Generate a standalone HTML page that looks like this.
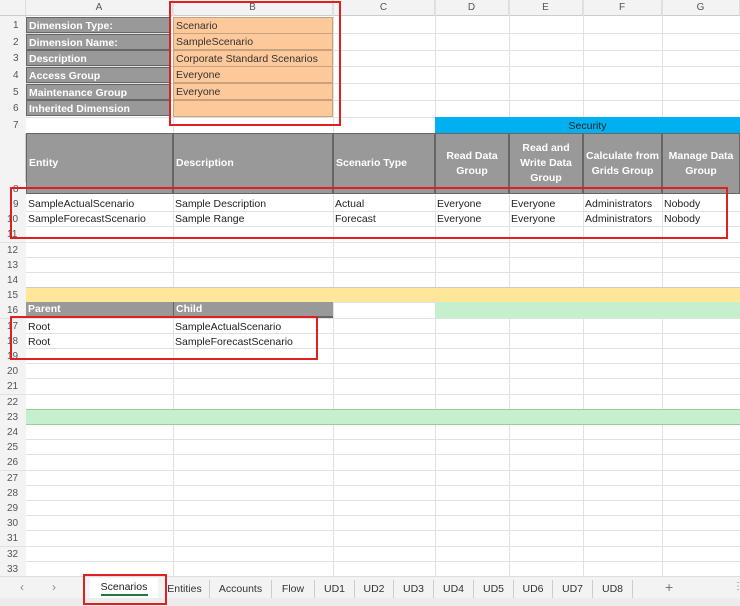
<!DOCTYPE html>
<html><head><meta charset="utf-8"><style>
*{margin:0;padding:0;box-sizing:border-box}
body{width:740px;height:606px;overflow:hidden;background:#fff;font-family:"Liberation Sans",Calibri,sans-serif;font-size:10.5px;color:#222;position:relative}
.a{position:absolute}
.hl{position:absolute;left:0;width:740px;height:1px;background:#e1e1e1}
.vl{position:absolute;top:0;height:576px;width:1px;background:#e1e1e1}
.ch{position:absolute;top:0;height:16px;text-align:center;line-height:16px;color:#555;font-size:10px;background:#f3f3f3;border-right:1px solid #ddd;border-bottom:1px solid #ccc}
.rn{position:absolute;left:0;width:26px;font-size:10px;color:#555;text-align:left;padding-left:13px;background:#f3f3f3}
.g{position:absolute;background:#999;color:#fff;font-weight:bold;border:1px solid #666;padding-left:2px}
.o{position:absolute;background:#fdc99a;border:1px solid #c9a27d;padding-left:2px;color:#333}
.t{position:absolute;padding-left:2px;color:#222;top:0}
.hd{position:absolute;background:#999;color:#fff;font-weight:bold;border:1px solid #666;display:flex;align-items:center;justify-content:center;text-align:center;line-height:15px}
.red{position:absolute;border:2px solid #e02020}
.tab{position:absolute;top:580px;height:18px;line-height:18px;font-size:10.5px;color:#333;border-right:1px solid #ccc;text-align:center}
</style></head><body>
<div class="a" style="left:0;top:0;width:26px;height:576px;background:#f3f3f3;border-right:1px solid #ccc"></div>
<div class="ch" style="left:0;width:26px"></div>
<div class="ch" style="left:26px;width:147px">A</div>
<div class="ch" style="left:173px;width:160px">B</div>
<div class="ch" style="left:333px;width:102px">C</div>
<div class="ch" style="left:435px;width:74px">D</div>
<div class="ch" style="left:509px;width:74px">E</div>
<div class="ch" style="left:583px;width:79px">F</div>
<div class="ch" style="left:662px;width:78px">G</div>
<div class="vl" style="left:173px"></div><div class="vl" style="left:333px"></div><div class="vl" style="left:435px"></div><div class="vl" style="left:509px"></div><div class="vl" style="left:583px"></div><div class="vl" style="left:662px"></div>
<div class="hl" style="top:33px"></div><div class="hl" style="top:50px"></div><div class="hl" style="top:66px"></div><div class="hl" style="top:83px"></div><div class="hl" style="top:100px"></div><div class="hl" style="top:117px"></div><div class="hl" style="top:133px"></div>
<div class="rn" style="top:17px;line-height:17px">1</div><div class="rn" style="top:34px;line-height:17px">2</div><div class="rn" style="top:50px;line-height:17px">3</div><div class="rn" style="top:67px;line-height:17px">4</div><div class="rn" style="top:84px;line-height:17px">5</div><div class="rn" style="top:100px;line-height:17px">6</div><div class="rn" style="top:117px;line-height:17px">7</div><div class="rn" style="top:182px;line-height:16px">8</div>
<div class="g" style="left:26px;top:17px;width:145px;height:16px;line-height:16px">Dimension Type:</div>
<div class="g" style="left:26px;top:34px;width:145px;height:16px;line-height:16px">Dimension Name:</div>
<div class="g" style="left:26px;top:50px;width:145px;height:16px;line-height:16px">Description</div>
<div class="g" style="left:26px;top:67px;width:145px;height:16px;line-height:16px">Access Group</div>
<div class="g" style="left:26px;top:84px;width:145px;height:16px;line-height:16px">Maintenance Group</div>
<div class="g" style="left:26px;top:100px;width:145px;height:16px;line-height:16px">Inherited Dimension</div>
<div class="o" style="left:173px;top:17px;width:160px;height:17px;line-height:17px">Scenario</div>
<div class="o" style="left:173px;top:33px;width:160px;height:17px;line-height:17px">SampleScenario</div>
<div class="o" style="left:173px;top:50px;width:160px;height:17px;line-height:17px">Corporate Standard Scenarios</div>
<div class="o" style="left:173px;top:66px;width:160px;height:17px;line-height:17px">Everyone</div>
<div class="o" style="left:173px;top:83px;width:160px;height:17px;line-height:17px">Everyone</div>
<div class="o" style="left:173px;top:100px;width:160px;height:17px"></div>
<div class="a" style="left:435px;top:117px;width:305px;height:16px;background:#00b0f0;color:#222;text-align:center;line-height:18px">Security</div>
<div class="hd" style="left:26px;top:133px;width:147px;height:61px;justify-content:flex-start;padding-left:2px">Entity</div>
<div class="hd" style="left:173px;top:133px;width:160px;height:61px;justify-content:flex-start;padding-left:2px">Description</div>
<div class="hd" style="left:333px;top:133px;width:102px;height:61px;justify-content:flex-start;padding-left:2px">Scenario Type</div>
<div class="hd" style="left:435px;top:133px;width:74px;height:61px">Read Data<br>Group</div>
<div class="hd" style="left:509px;top:133px;width:74px;height:61px">Read and<br>Write Data<br>Group</div>
<div class="hd" style="left:583px;top:133px;width:79px;height:61px">Calculate from<br>Grids Group</div>
<div class="hd" style="left:662px;top:133px;width:78px;height:61px">Manage Data<br>Group</div>
<div id="rows"></div>
<script>
var h='';var top0=196,rh=15.2;
for(var i=9;i<=33;i++){var t=top0+(i-9)*rh;h+='<div class="hl" style="top:'+(t+rh).toFixed(1)+'px"></div><div class="rn" style="top:'+(t+1).toFixed(1)+'px;line-height:15px;padding-left:'+(i<10?13:7)+'px">'+i+'</div>';}
document.getElementById('rows').innerHTML=h;
</script>
<div class="a" style="left:26px;top:287px;width:714px;height:15px;background:#ffe699;border-top:1px solid #ccc"></div>
<div class="a" style="left:26px;top:302px;width:307px;height:16px;background:#999;border-bottom:2px solid #666;color:#fff;font-weight:bold;line-height:15px;padding-left:2px">Parent</div>
<div class="a" style="left:173px;top:302px;width:160px;height:16px;border-left:1px solid #666;color:#fff;font-weight:bold;line-height:15px;padding-left:2px">Child</div>
<div class="a" style="left:435px;top:302px;width:305px;height:16px;background:#c6efce"></div>
<div class="a" style="left:26px;top:409px;width:714px;height:16px;background:#c6efce;border-top:1px solid #9c9;border-bottom:1px solid #9c9"></div>
<div class="a" style="left:0;top:198px;width:740px;height:15px"><div class="t" style="left:26px">SampleActualScenario</div><div class="t" style="left:173px">Sample Description</div><div class="t" style="left:333px">Actual</div><div class="t" style="left:435px">Everyone</div><div class="t" style="left:509px">Everyone</div><div class="t" style="left:583px">Administrators</div><div class="t" style="left:662px">Nobody</div></div>
<div class="a" style="left:0;top:213px;width:740px;height:15px"><div class="t" style="left:26px">SampleForecastScenario</div><div class="t" style="left:173px">Sample Range</div><div class="t" style="left:333px">Forecast</div><div class="t" style="left:435px">Everyone</div><div class="t" style="left:509px">Everyone</div><div class="t" style="left:583px">Administrators</div><div class="t" style="left:662px">Nobody</div></div>
<div class="a" style="left:0;top:321px;width:740px;height:15px"><div class="t" style="left:26px">Root</div><div class="t" style="left:173px">SampleActualScenario</div></div>
<div class="a" style="left:0;top:336px;width:740px;height:15px"><div class="t" style="left:26px">Root</div><div class="t" style="left:173px">SampleForecastScenario</div></div>
<div class="red" style="left:169px;top:1px;width:172px;height:125px"></div>
<div class="red" style="left:10px;top:187px;width:718px;height:52px"></div>
<div class="red" style="left:10px;top:316px;width:308px;height:44px"></div>
<div class="a" style="left:0;top:576px;width:740px;height:30px;background:#f3f3f3;border-top:1px solid #ddd"></div>
<div class="a" style="left:0;top:598px;width:740px;height:8px;background:#ececec"></div>
<div class="a" style="left:20px;top:580px;font-size:12px;color:#888">&#8249;</div>
<div class="a" style="left:52px;top:580px;font-size:12px;color:#888">&#8250;</div>
<div class="a" style="left:90px;top:578px;width:68px;height:20px;background:#fff;text-align:center;line-height:19px;color:#222">Scenarios</div>
<div class="a" style="left:101px;top:594px;width:47px;height:2px;background:#1e7b3b"></div>
<div class="tab" style="left:160px;width:50px">Entities</div>
<div class="tab" style="left:210px;width:62px">Accounts</div>
<div class="tab" style="left:272px;width:43px">Flow</div>
<div class="tab" style="left:315px;width:40px">UD1</div>
<div class="tab" style="left:355px;width:39px">UD2</div>
<div class="tab" style="left:394px;width:40px">UD3</div>
<div class="tab" style="left:434px;width:40px">UD4</div>
<div class="tab" style="left:474px;width:40px">UD5</div>
<div class="tab" style="left:514px;width:39px">UD6</div>
<div class="tab" style="left:553px;width:40px">UD7</div>
<div class="tab" style="left:593px;width:40px">UD8</div>
<div class="a" style="left:665px;top:579px;font-size:14px;color:#777">+</div>
<div class="a" style="left:733px;top:581px;font-size:10px;color:#777">&#8942;</div>
<div class="red" style="left:83px;top:574px;width:84px;height:31px"></div>
</body></html>
